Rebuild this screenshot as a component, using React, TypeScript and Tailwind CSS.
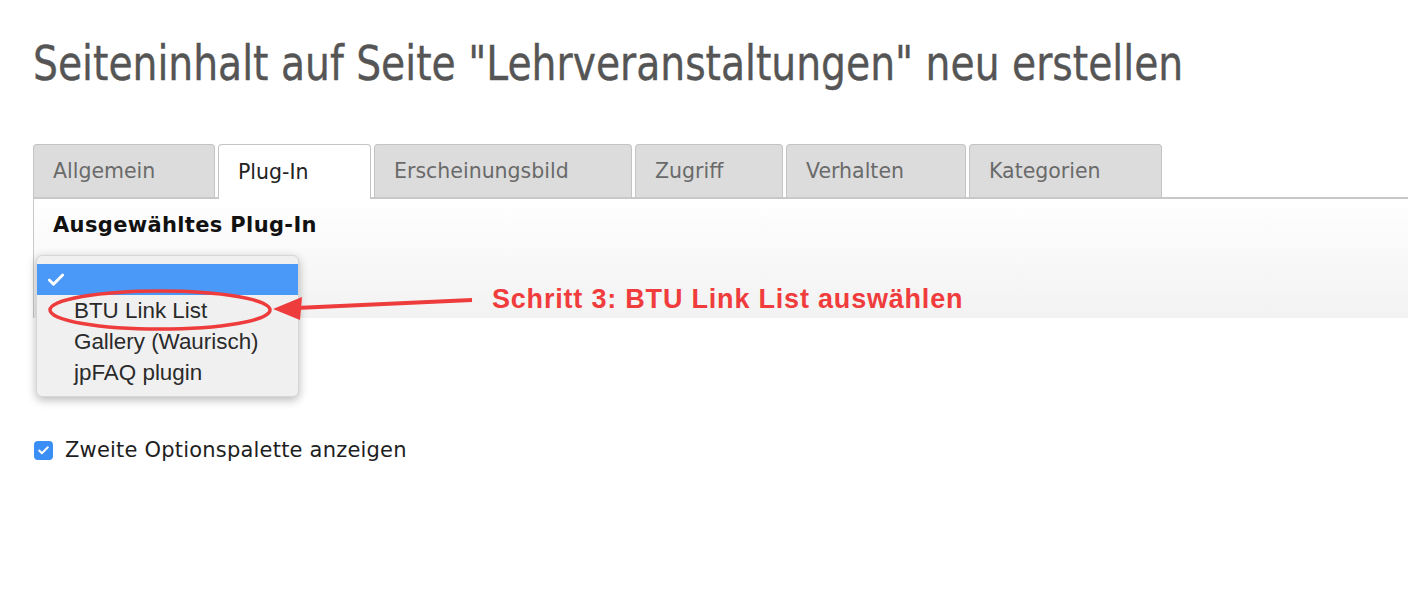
import { Check } from "lucide-react";

const TABS = [
  { label: "Allgemein", w: "w-[182px]" },
  { label: "Plug-In", w: "w-[153px]", active: true },
  { label: "Erscheinungsbild", w: "w-[258px]" },
  { label: "Zugriff", w: "w-[148px]" },
  { label: "Verhalten", w: "w-[180px]" },
  { label: "Kategorien", w: "w-[193px]" },
];

const OPTIONS = ["BTU Link List", "Gallery (Waurisch)", "jpFAQ plugin"];

export default function App() {
  return (
    <div className="relative h-[600px] w-[1408px] overflow-hidden bg-white font-['DejaVu_Sans',sans-serif]">
      <h1 className="whitespace-nowrap pl-[33px] pt-[34px] font-['DejaVu_Sans',sans-serif] text-[48px] leading-[58px] text-[#555555]">
        <span className="inline-block origin-left scale-x-[0.818] [-webkit-text-stroke:0.4px_#555555]">
          Seiteninhalt auf Seite "Lehrveranstaltungen" neu erstellen
        </span>
      </h1>

      {/* tabs */}
      <div className="mt-[52px] flex gap-[3px] pl-[33px]">
        {TABS.map((t) => (
          <div
            key={t.label}
            className={`${t.w} flex h-[53px] items-center rounded-t-[4px] border border-b-0 border-[#c4c4c4] pl-[19px] text-[20.5px] ${
              t.active
                ? "relative z-10 -mb-[2px] h-[55px] bg-white text-[#222]"
                : "bg-[#dcdcdc] text-[#6a6a6a]"
            }`}
          >
            {t.label}
          </div>
        ))}
      </div>

      {/* panel */}
      <div className="relative ml-[33px] h-[121px] border-l border-t-2 border-[#c8c8c8] bg-gradient-to-b from-white to-[#f2f2f2]">
        <div className="pl-[19px] pt-[11px] text-[21px] font-bold tracking-[0.35px] text-[#111]">
          Ausgewähltes Plug-In
        </div>

        {/* open select menu */}
        <div className="absolute left-[2px] top-[56px] z-20 w-[263px] rounded-[6px] border border-[#d6d6d6] bg-[#f0f0f0] py-[8px] font-['Liberation_Sans',sans-serif] text-[22.4px] text-[#2a2a2a] shadow-[0_3px_10px_rgba(0,0,0,0.28)]">
          <div className="flex h-[31px] items-center bg-[#4a98f8] pl-[9px] text-white">
            <Check size={20} strokeWidth={3.5} />
          </div>
          {OPTIONS.map((o) => (
            <div key={o} className="flex h-[31px] items-center pl-[37px]">
              {o}
            </div>
          ))}
        </div>
      </div>

      <label className="mt-[117px] flex items-center gap-[12px] pl-[34px] text-[21px] tracking-[0.2px] text-[#1e1e1e]">
        <span className="flex h-[19px] w-[19px] items-center justify-center rounded-[4px] bg-[#3a8ef6] text-white">
          <Check size={13} strokeWidth={3.5} />
        </span>
        Zweite Optionspalette anzeigen
      </label>

      {/* annotation */}
      <svg className="absolute left-0 top-0 z-30" width="1408" height="600">
        <ellipse cx="160" cy="310" rx="110" ry="19" fill="none" stroke="#ee3b3b" strokeWidth="3.5" />
        <line x1="472" y1="300" x2="296" y2="308" stroke="#ee3b3b" strokeWidth="4" />
        <polygon points="273,309 302,297 300,320" fill="#ee3b3b" />
      </svg>
      <div className="absolute left-[492px] top-[279px] z-30 font-['Liberation_Sans',sans-serif] text-[27px] font-bold tracking-[0.8px] text-[#f03c3c]">
        Schritt 3: BTU Link List auswählen
      </div>
    </div>
  );
}
